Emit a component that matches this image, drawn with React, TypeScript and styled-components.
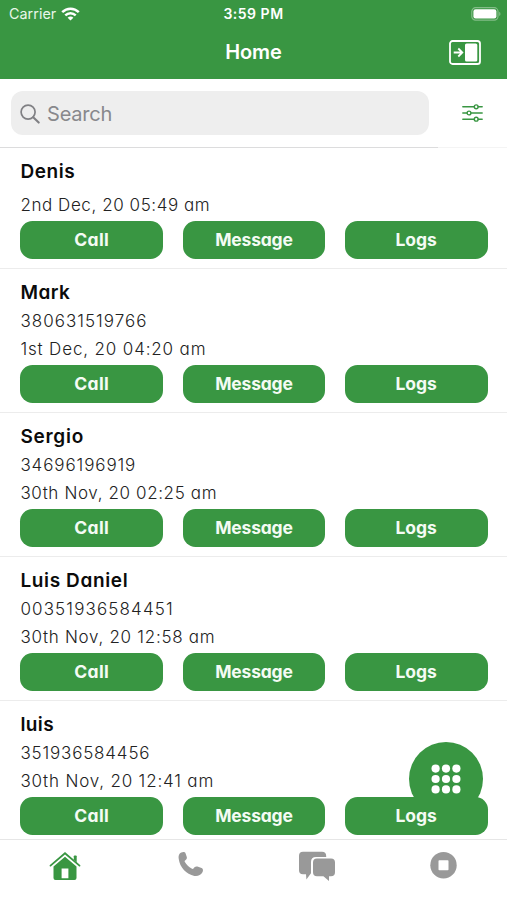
import React from 'react';
import styled, { createGlobalStyle } from 'styled-components';

const GREEN = '#399642';
const GREY = '#999999';

const GlobalStyle = createGlobalStyle`
  * { box-sizing: border-box; }
  body { margin: 0; background: #fff; font-family: Inter, "Liberation Sans", sans-serif; }
  svg { display: block; }
`;

const Screen = styled.main`
  width: 507px;
  height: 900px;
  display: flex;
  flex-direction: column;
  overflow: hidden;
  position: relative;
  background: #fff;
`;

const Header = styled.header`
  height: 79.4px;
  flex: none;
  background: ${GREEN};
  color: #fff;
`;

const TopGrid = styled.div<{ $h: number }>`
  height: ${p => p.$h}px;
  display: grid;
  grid-template-columns: 1fr auto 1fr;
  align-items: center;
`;

const Carrier = styled.div`
  display: flex;
  align-items: center;
  gap: 5px;
  padding-left: 9px;
  font-size: 14.3px;
  letter-spacing: 0.05px;
  color: #e9f6ea;
`;

const Clock = styled.div`
  font-size: 14px;
  font-weight: 600;
  letter-spacing: 0.5px;
`;

const Right = styled.div<{ $pad: number }>`
  display: flex;
  justify-content: flex-end;
  padding-right: ${p => p.$pad}px;
`;

const Title = styled.h1`
  margin: 0;
  font-size: 20px;
  line-height: 24px;
  font-weight: 600;
  letter-spacing: -0.1px;
`;

const SearchBar = styled.section`
  height: 68.6px;
  flex: none;
  display: grid;
  grid-template-columns: 438px 1fr;
`;

const SearchSide = styled.div`
  padding: 12px 9.5px 0 11px;
  border-bottom: 1px solid #dcdcdd;
`;

const FilterSide = styled.div`
  display: flex;
  justify-content: center;
  padding-top: 24px;
  border-bottom: 1px solid #f4f4f4;
`;

const Field = styled.div`
  height: 44px;
  border-radius: 12px;
  background: #eeeeee;
  display: flex;
  align-items: center;
  gap: 7px;
  padding: 1px 0 0 9px;
  color: #88888c;
  font-size: 20px;
  letter-spacing: -0.2px;
`;

const List = styled.ul`
  list-style: none;
  margin: 0;
  padding: 0;
  flex: 1;
  min-height: 0;
  overflow: hidden;
`;

const Row = styled.li<{ $short: boolean }>`
  height: ${p => (p.$short ? 120.8 : 144.1)}px;
  padding: ${p => (p.$short ? 10.8 : 11.4)}px 19.5px 9px 20.4px;
  border-bottom: 1px solid #ececec;
  display: flex;
  flex-direction: column;
  font-feature-settings: "cv11";
`;

const Name = styled.div<{ $track: number; $gap: number }>`
  height: 27px;
  margin-bottom: ${p => p.$gap}px;
  line-height: 26px;
  font-size: 19px;
  font-weight: 600;
  letter-spacing: ${p => p.$track}px;
  color: #0b0b0b;
`;

const Detail = styled.div<{ $track: number }>`
  height: 28px;
  line-height: 28px;
  font-size: 17px;
  font-weight: 300;
  letter-spacing: ${p => p.$track}px;
  color: #222;
  white-space: nowrap;
`;

const Actions = styled.div`
  margin-top: auto;
  display: grid;
  grid-template-columns: repeat(3, 1fr);
  gap: 19.5px;
`;

const Action = styled.button<{ $track: number }>`
  height: 38px;
  border: 0;
  padding: 0;
  border-radius: 12.5px;
  background: ${GREEN};
  color: #f4fbf4;
  font: 700 17.5px/38px Inter, sans-serif;
  font-feature-settings: "cv11";
  letter-spacing: ${p => p.$track}px;
  position: relative;
  z-index: 2;
`;

const DialFab = styled.button`
  position: absolute;
  z-index: 1;
  left: 408.6px;
  top: 742px;
  width: 74px;
  height: 74px;
  border: 0;
  padding: 0;
  border-radius: 50%;
  background: ${GREEN};
  display: grid;
  place-items: center;
`;

const Tabs = styled.nav`
  height: 60.6px;
  flex: none;
  border-top: 1.5px solid #e6e6e6;
  display: grid;
  grid-template-columns: repeat(4, 1fr);
  justify-items: center;
  align-items: start;
  padding: 11px 0 0 1.5px;
  background: #fff;
`;

type Line = [string, number];
interface Contact { name: Line; phone?: Line; date: Line }

const contacts: Contact[] = [
  { name: ['Denis', 0.6], date: ['2nd Dec, 20 05:49 am', 0.57] },
  { name: ['Mark', 0.5], phone: ['380631519766', 1.03], date: ['1st Dec, 20 04:20 am', 0.85] },
  { name: ['Sergio', 0.75], phone: ['34696196919', 0.9], date: ['30th Nov, 20 02:25 am', 0.62] },
  { name: ['Luis Daniel', 0.63], phone: ['00351936584451', 1.14], date: ['30th Nov, 20 12:58 am', 0.72] },
  { name: ['luis', 0.4], phone: ['351936584456', 0.83], date: ['30th Nov, 20 12:41 am', 0.82] },
];

const actions: Line[] = [['Call', 0.35], ['Message', -0.2], ['Logs', 0]];

const Wifi = () => (
  <svg width="19" height="14" viewBox="0 0 19 14" fill="none" stroke="#fff" strokeWidth="2.5">
    <path d="M1.2 5.2C6 .6 13 .6 17.8 5.2" />
    <path d="M4.3 8.4c3-2.9 7.4-2.9 10.4 0" />
    <path d="M9.5 13.5 6.6 10.7c1.7-1.5 4.1-1.5 5.8 0Z" fill="#fff" stroke="none" />
  </svg>
);

const Battery = () => (
  <svg width="30" height="14" viewBox="0 0 30 14">
    <rect x=".8" y=".7" width="26.2" height="12.4" rx="3.8" fill="none" stroke="#83bd88" strokeWidth="1.2" />
    <rect x="2.4" y="2.3" width="23" height="9.2" rx="2.2" fill="#fff" />
    <path d="M28.2 4.8c1.7.7 1.7 3.6 0 4.3Z" fill="#83bd88" />
  </svg>
);

const PanelIcon = () => (
  <svg width="32" height="25" viewBox="0 0 32 25">
    <rect x="1" y="1" width="30" height="23" rx="2.6" fill="none" stroke="#fff" strokeWidth="1.8" />
    <rect x="16" y="3.5" width="12.3" height="18" rx="1.6" fill="#fff" />
    <path d="M4.7 12.5h8.2M9.3 8.5l4 4-4 4" fill="none" stroke="#fff" strokeWidth="1.8" />
  </svg>
);

const SearchIcon = () => (
  <svg width="20" height="20" viewBox="0 0 20 20" fill="none" stroke="#808084" strokeLinecap="round">
    <circle cx="8.1" cy="8.1" r="7" strokeWidth="1.7" />
    <path d="m13.2 13.2 5.5 5.4" strokeWidth="2.1" />
  </svg>
);

const FilterIcon = () => (
  <svg width="21" height="20" viewBox="0 0 21 20" fill="none" stroke={GREEN} strokeWidth="1.4" strokeLinecap="round">
    <path d="M.8 3.8h11.3M16.2 3.8h4M.8 10h4.2M9 10h11.2M.8 16.2h11.3M16.2 16.2h4" />
    <circle cx="14.2" cy="3.8" r="1.9" />
    <circle cx="7" cy="10" r="1.9" />
    <circle cx="14.2" cy="16.2" r="1.9" />
  </svg>
);

const DialDots = () => (
  <svg width="30" height="30" viewBox="0 0 30 30" fill="#fff">
    {[4.6, 15, 25.4].map(y => [4.6, 15, 25.4].map(x => <circle key={`${x}-${y}`} cx={x} cy={y} r="4.1" />))}
  </svg>
);

const HomeIcon = () => (
  <svg width="32" height="30" viewBox="0 0 32 30" fill={GREEN}>
    <path d="M1.5 14.6 16 2.2l14.5 12.4" fill="none" stroke={GREEN} strokeWidth="1.8" strokeLinecap="round" />
    <path d="M24.8 5.3q0-.9.9-.9h1.1q.9 0 .9.9v6l-2.9-2.5Z" />
    <path fillRule="evenodd" d="M16 5.8 27.5 15.600V27q0 2-2 2h-19q-2 0-2-2V15.600ZM12.600 17.400v9.800h6.800v-9.800Z" />
  </svg>
);

const PhoneIcon = () => (
  <svg width="26" height="27" viewBox="0 0 26 27" fill={GREY}>
    <path d="M1.600 2.800C3 1.200 6.400.2 7.500 2.200L8.800 6c.4 1.600-.4 2.600-1.700 3.400-.6.4-.5 1.100-.2 1.700 1.700 2.900 3.900 5 6.700 6.500.8.4 1.400.4 1.900-.2.9-1.400 2.200-2.300 3.900-1.800l4.200 1.400c1.800.9 1.700 3 .7 4.500-1.600 2.700-4.500 4-7.900 3.400C8.300 23.400 1.700 16 .8 8.300.4 6 .5 4.200 1.600 2.800Z" />
  </svg>
);

const ChatIcon = () => (
  <svg width="38" height="31" viewBox="0 0 38 31" fill={GREY}>
    <path d="M5 .8h19q4 0 4.200 4.200v1H18q-5 0-5 5v11.200l-4.600 6.300-.4-5.300H5q-4 0-4-4V4.800q0-4 4-4Z" />
    <path d="M19 7.500h14q4 0 4 4v9.700q0 4-4 4h-2v4.900l-5.600-4.900H19q-4 0-4-4v-9.700q0-4 4-4Z" />
  </svg>
);

const StopIcon = () => (
  <svg width="27" height="28" viewBox="0 0 27 28">
    <circle cx="13.5" cy="14.2" r="13.2" fill={GREY} />
    <rect x="8.500" y="9.200" width="10" height="10" rx=".8" fill="#fff" />
  </svg>
);

export default function App() {
  return (
    <>
      <GlobalStyle />
      <Screen>
        <Header>
          <TopGrid $h={27}>
            <Carrier><span>Carrier</span><Wifi /></Carrier>
            <Clock>3:59 PM</Clock>
            <Right $pad={6}><Battery /></Right>
          </TopGrid>
          <TopGrid $h={50}>
            <span />
            <Title>Home</Title>
            <Right $pad={26.5}><PanelIcon /></Right>
          </TopGrid>
        </Header>
        <SearchBar>
          <SearchSide><Field><SearchIcon /><span>Search</span></Field></SearchSide>
          <FilterSide><FilterIcon /></FilterSide>
        </SearchBar>
        <List>
          {contacts.map(c => (
            <Row key={c.name[0]} $short={!c.phone}>
              <Name $track={c.name[1]} $gap={c.phone ? 0 : 5}>{c.name[0]}</Name>
              {c.phone && <Detail $track={c.phone[1]}>{c.phone[0]}</Detail>}
              <Detail $track={c.date[1]}>{c.date[0]}</Detail>
              <Actions>
                {actions.map(([label, track]) => (
                  <Action key={label} $track={track}>{label}</Action>
                ))}
              </Actions>
            </Row>
          ))}
        </List>
        <Tabs>
          <HomeIcon />
          <PhoneIcon />
          <ChatIcon />
          <StopIcon />
        </Tabs>
        <DialFab aria-label="Dial pad"><DialDots /></DialFab>
      </Screen>
    </>
  );
}
